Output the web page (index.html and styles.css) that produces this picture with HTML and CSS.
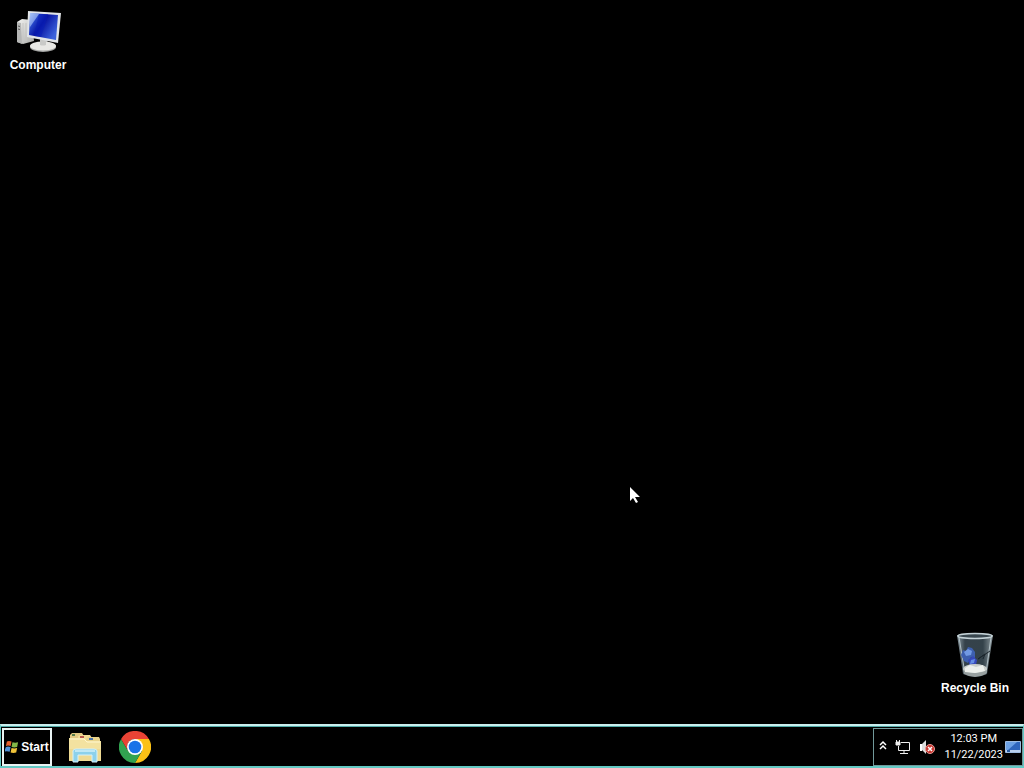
FILE: index.html
```html
<!DOCTYPE html>
<html lang="en">
<head>
<meta charset="utf-8">
<title>Desktop</title>
<link rel="stylesheet" href="styles.css">
</head>
<body>
<main class="desktop">
  <button class="shortcut computer">
    <svg width="48" height="48" viewBox="0 0 48 48" aria-hidden="true">
      <defs>
        <linearGradient id="screen" x1="0" y1="0" x2="1" y2=".6"><stop offset="0" stop-color="#8fb4f5"/><stop offset=".28" stop-color="#2545c8"/><stop offset=".5" stop-color="#0612a0"/><stop offset="1" stop-color="#3c62dc"/></linearGradient>
        <linearGradient id="metal" x1="0" y1="0" x2="1" y2="1"><stop offset="0" stop-color="#f5f5f3"/><stop offset="1" stop-color="#a9aaa8"/></linearGradient>
      </defs>
      <path d="M3 14 8 11 18 12 20 33 9 36 3 34Z" fill="url(#metal)"/>
      <path d="M3 14 7 15 8 36 3 34Z" fill="#b5b6b5"/>
      <path d="M9 15v19M12 15v18" stroke="#c5c5c3"/>
      <path d="M4 18l2 .5M4 21l2 .5" stroke="#555"/>
      <path d="M26 30h7l1 7h-8z" fill="#babbb9"/>
      <ellipse cx="29" cy="39" rx="13" ry="5" fill="#a3a4a2"/>
      <ellipse cx="29" cy="38" rx="13" ry="4.500" fill="#e8e8e5"/>
      <path d="M26 32h6v5q-3 1-6 0z" fill="#c9cac8"/>
      <path d="M14 3 47 5 44 35 13 29Z" fill="#e2e5e8"/>
      <path d="M16 5 44 7 42 32 15 27Z" fill="url(#screen)"/>
      <path d="M25 6 34 6 27 29 20 28Z" fill="#0a1fb8" opacity=".55"/>
      <path d="M16 5 25 6 16 19Z" fill="#c2dbff" opacity=".55"/>
    </svg>
    <span>Computer</span>
  </button>
  <button class="shortcut recycle">
    <svg width="48" height="48" viewBox="0 0 48 48" aria-hidden="true">
      <defs><linearGradient id="glass"><stop offset="0" stop-color="#8b9aa2"/><stop offset=".22" stop-color="#35424b"/><stop offset=".72" stop-color="#34424a"/><stop offset="1" stop-color="#8c989d"/></linearGradient></defs>
      <path d="M6 4 42 4 36 43Q24 49 12 43Z" fill="url(#glass)"/>
      <path d="M8 6 14 43M40 6 35 42" stroke="#b2c0c5" fill="none"/>
      <path d="M39 20 27 28 34 23 32 28" stroke="#1b252c" fill="none"/>
      <path d="M10 24 12 19 15 20 17 16 21 17 24 21 24 27 20 26 17 32 13 30Z" fill="#3d5fae"/>
      <path d="M13 21 17 18 21 20 20 24 15 25Z" fill="#7199e3"/>
      <path d="M17 29 22 25 26 29 25 34 19 35Z" fill="#3648ba"/>
      <path d="M20 29 24 28 23 32 19 33Z" fill="#658de4"/>
      <ellipse cx="24" cy="38" rx="12" ry="5" fill="#c9cecb"/>
      <path d="M12 39Q24 45 36 39L35 43Q24 49 13 43Z" fill="#979f9f"/>
      <path d="M14 37 19 34 25 36 32 34 34 40 24 42 14 41Z" fill="#ecefeb"/>
      <ellipse cx="24" cy="5" rx="17" ry="2.500" fill="#39474f" stroke="#c4d2d7" stroke-width="1.500"/>
    </svg>
    <span>Recycle Bin</span>
  </button>
  <svg class="pointer" width="12" height="18" viewBox="0 0 12 18" aria-hidden="true"><path d="M1 0v14l3-3 3 5 2-1-3-5h5Z" fill="#fff"/></svg>
</main>
<footer class="taskbar">
  <button class="start">
    <svg width="14" height="16" viewBox="1 0 15 16" aria-hidden="true"><path d="M3 2q2-1 5 0L7 7q-3-1-5 0Z" fill="#e4602c"/><path d="M9 3q3 1 6 0l-1 5q-3 1-6 0Z" fill="#83b748"/><path d="M2 8q2-1 5 0l-1 5q-3-1-6 0Z" fill="#4f91d6"/><path d="M8 9q3 1 6 0l-1 5q-3 1-6 0Z" fill="#f0c43a"/></svg>
    <span>Start</span>
  </button>
  <nav class="pinned" aria-label="Pinned programs">
    <button aria-label="File Explorer">
      <svg width="34" height="34" viewBox="0 0 34 34" aria-hidden="true">
        <path d="M2 5 4 3H14L16 6V10H2Z" fill="#e2ca84"/><path d="M10 6 12 5H22L24 8V12H10Z" fill="#f1dc95"/><path d="M18 9 20 7H31L32 9V14H18Z" fill="#e9d48c"/>
        <path d="M1 8H16L19 11H33V31H1Z" fill="#f3e2a0"/><path d="M2 9H16L19 12H32" stroke="#fff6ce" fill="none"/><path d="M1 19v12h32V19" fill="#e9d184" opacity=".5"/>
        <path d="M4 5h3" stroke="#557c4b" stroke-width="2"/><path d="M12 7h4" stroke="#b8584b" stroke-width="2"/><path d="M21 9h4" stroke="#4b75ad" stroke-width="2"/>
        <path d="M5 32V21Q5 19 8 19H26Q29 19 29 21V32H24V25H10V32Z" fill="#8cd1eb" stroke="#d4f1fa"/><path d="M7 21h20" stroke="#bfe8f5" stroke-width="2"/>
      </svg>
    </button>
    <button aria-label="Google Chrome">
      <svg width="32" height="32" viewBox="0 0 32 32" aria-hidden="true">
        <path d="M16 8H29.900A16 16 0 0 1 16 32L22.900 20Z" fill="#fbc116"/>
        <path d="M2.100 8A16 16 0 0 0 16 32L22.900 20 16 16 9.100 20Z" fill="#31a350"/>
        <path d="M2.100 8A16 16 0 0 1 29.900 8H16A8 8 0 0 0 9.100 20Z" fill="#e94335"/>
        <circle cx="16" cy="16" r="8" fill="#fff"/><circle cx="16" cy="16" r="6.300" fill="#1a73e8"/>
      </svg>
    </button>
  </nav>
  <aside class="tray" aria-label="Notification area">
    <button aria-label="Show hidden icons"><svg width="8" height="16" viewBox="0 0 8 16" fill="none" stroke="#fff" stroke-width="1.500" aria-hidden="true"><path d="M1 6 4 3 7 6M1 10 4 7 7 10"/></svg></button>
    <button aria-label="Network"><svg width="16" height="16" viewBox="0 0 16 16" fill="none" stroke="#eee" aria-hidden="true"><path d="M6 3.500h8.500v8h-11V7M9 12v2.500M5 14.500h8"/><path d="M1.500 1v2M4.500 1v2"/><path d="M1 3h4v3H1Z" fill="#eee"/></svg></button>
    <button aria-label="Volume, muted"><svg width="16" height="16" viewBox="0 0 16 16" aria-hidden="true"><path d="M1 5h2v7H1Z" fill="#fff"/><path d="M3 5 7 1V15L3 11Z" fill="#ddd"/><circle cx="11" cy="10" r="4.500" fill="#c7332d" stroke="#e79a94"/><path d="m9 8 4 4m0-4-4 4" stroke="#fff" stroke-width="1.500"/></svg></button>
    <button class="clock"><time datetime="2023-11-22T12:03">12:03 PM<br>11/22/2023</time></button>
    <button aria-label="Show desktop"><svg width="16" height="16" viewBox="0 0 16 16" aria-hidden="true"><path d="M.5 2.500h15v11H.5Z" fill="#2f66bd" stroke="#9ebbe0"/><path d="M1 3h11L3 11H1Z" fill="#6ba0e4"/><path d="M1 12h14" stroke="#b9d0ed" stroke-width="2"/><path d="M2 12h3" stroke="#285b9f" stroke-width="2"/></svg></button>
  </aside>
</footer>
</body>
</html>
```
FILE: styles.css
```css
* { box-sizing: border-box; }

body {
  margin: 0;
  min-height: 100vh;
  display: flex;
  flex-direction: column;
  overflow: hidden;
  background: #000;
  color: #fff;
  font-family: "Liberation Sans", Arial, sans-serif;
}

button {
  padding: 0;
  border: 0;
  background: transparent;
  color: inherit;
  font: inherit;
}

svg { display: block; flex: none; }

.desktop {
  position: relative;
  flex: 1;
}

.shortcut {
  position: absolute;
  width: 76px;
  display: flex;
  flex-direction: column;
  align-items: center;
  gap: 1px;
  font-size: 12px;
  font-weight: 700;
  line-height: 16px;
  white-space: nowrap;
}

.computer { left: 0; top: 8px; }
.recycle { right: 11px; bottom: 28px; }
.pointer { position: absolute; left: 629px; top: 487px; }

.taskbar {
  height: 44px;
  flex: none;
  display: flex;
  align-items: stretch;
  justify-content: space-between;
  padding: 1px 0 0 1px;
  border: 1px solid #63c9c4;
  border-top: 2px solid #c9eeee;
  border-bottom-width: 2px;
  box-shadow: inset 0 1px #4fa9a6;
}

.start {
  width: 50px;
  margin-top: 1px;
  display: flex;
  align-items: center;
  justify-content: center;
  gap: 2px;
  border: 2px solid #e9f3f3;
  font-size: 12px;
  font-weight: 700;
}

.pinned {
  flex: 1;
  display: flex;
  align-items: center;
  gap: 17px;
  padding: 1px 0 0 16px;
}

.tray {
  margin-top: 1px;
  display: flex;
  align-items: center;
  gap: 8px;
  padding: 0 1px 0 5px;
  border: 1px solid #71999a;
}

.clock {
  margin: 0 -6px 0 1px;
  font-family: Roboto, sans-serif;
  font-size: 11px;
  line-height: 16px;
  text-align: center;
}
```
